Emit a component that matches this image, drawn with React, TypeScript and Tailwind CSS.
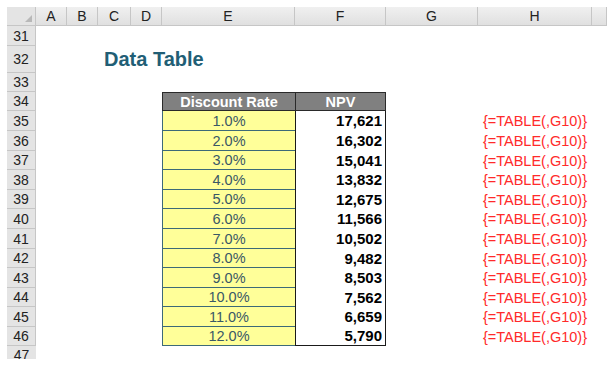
const rates = ["1.0%", "2.0%", "3.0%", "4.0%", "5.0%", "6.0%", "7.0%", "8.0%", "9.0%", "10.0%", "11.0%", "12.0%"];
const npvs = ["17,621", "16,302", "15,041", "13,832", "12,675", "11,566", "10,502", "9,482", "8,503", "7,562", "6,659", "5,790"];
const tableHeights = [20, 20, 19, 20, 19, 20, 20, 19, 20, 19, 20, 19];

const cols = ["A", "B", "C", "D", "E", "F", "G", "H", ""];
const grid = "grid grid-cols-[29px_31px_31px_33px_31px_133px_91px_92px_114px_1fr] grid-rows-[minmax(0,1fr)]";

function RowHead({ n }: { n: number }) {
  return (
    <div className="flex items-center justify-center border-b border-r border-[#c6c6c6] bg-[#e4e4e4] text-[14px] text-[#222]">
      {n}
    </div>
  );
}

export default function App() {
  return (
    <div className="h-[388px] w-[607px] overflow-hidden bg-white pl-[7px] pt-[7px] font-['Liberation_Sans',Arial,sans-serif] leading-[16px]">
      {/* Column headers */}
      <div className={`${grid} h-[19px]`}>
        <div className="relative border-b border-r border-[#c6c6c6] bg-[#e4e4e4]">
          <div className="absolute bottom-[3px] right-[3px] h-0 w-0 border-b-[7px] border-l-[7px] border-b-[#b8b8b8] border-l-transparent" />
        </div>
        {cols.map((c, i) => (
          <div
            key={i}
            className="flex items-center justify-center border-b border-r border-[#c6c6c6] bg-gradient-to-b from-[#f0f0f0] to-[#e0e0e0] text-[14px] text-[#222]"
          >
            {c}
          </div>
        ))}
      </div>

      {/* Row 31 */}
      <div className={`${grid} h-[20px]`}>
        <RowHead n={31} />
      </div>

      {/* Row 32 - title */}
      <div className={`${grid} h-[27px]`}>
        <RowHead n={32} />
        <div className="col-span-5 flex items-end pb-[4px] pl-[68px]">
          <span className="whitespace-nowrap text-[20px] font-bold leading-[20px] text-[#215e75]">Data Table</span>
        </div>
      </div>

      {/* Row 33 */}
      <div className={`${grid} h-[19px]`}>
        <RowHead n={33} />
      </div>

      {/* Row 34 - table header */}
      <div className={`${grid} h-[19px]`}>
        <RowHead n={34} />
        <div className="col-span-4" />
        <div className="flex items-center justify-center border border-r-0 border-[#2a2a2a] bg-[#808080] text-[14.5px] font-bold text-white">
          Discount Rate
        </div>
        <div className="flex items-center justify-center border border-[#2a2a2a] bg-[#808080] text-[14.5px] font-bold text-white">
          NPV
        </div>
      </div>

      {/* Rows 35-46 */}
      {rates.map((r, i) => (
        <div key={r} className={grid} style={{ height: tableHeights[i] }}>
          <RowHead n={35 + i} />
          <div className="col-span-4" />
          <div className="flex items-center justify-center border-b border-l border-[#3d6a78] bg-[#ffff99] text-[14.5px] text-[#3a5866]">
            {r}
          </div>
          <div
            className={`flex items-center justify-end border-x border-[#1a1a1a] bg-white pr-[3px] text-[15px] font-bold text-black ${
              i === rates.length - 1 ? "border-b" : ""
            }`}
          >
            {npvs[i]}
          </div>
          <div />
          <div className="flex items-center justify-center whitespace-nowrap text-[14.5px] text-[#ff2a2a]">
            {"{=TABLE(,G10)}"}
          </div>
        </div>
      ))}

      {/* Row 47 (cut off) */}
      <div className={`${grid} h-[13px]`}>
        <div className="flex items-start justify-center overflow-hidden bg-[#e4e4e4] pt-[1px] text-[14px] leading-[16px] text-[#222]">
          47
        </div>
      </div>
    </div>
  );
}
